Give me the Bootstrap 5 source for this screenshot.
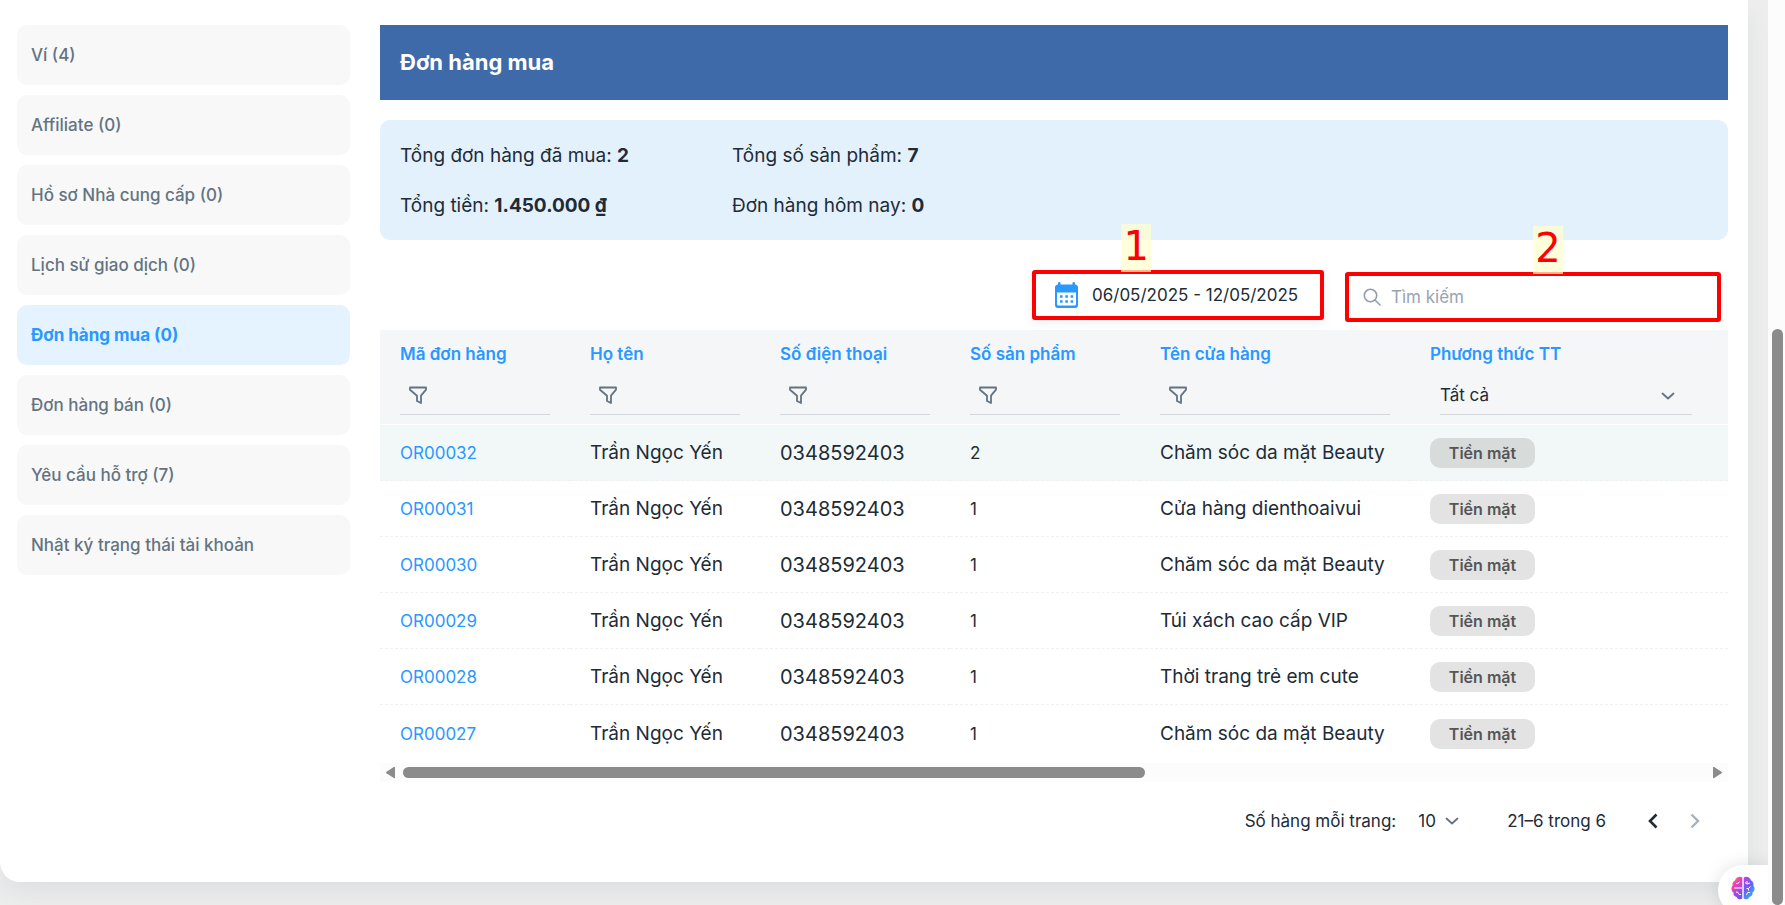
<!DOCTYPE html>
<html lang="vi">
<head>
<meta charset="utf-8">
<meta name="viewport" content="width=device-width, initial-scale=1">
<title>Đơn hàng mua</title>
<link href="https://cdn.jsdelivr.net/npm/bootstrap@5.3.0/dist/css/bootstrap.min.css" rel="stylesheet">
<style>
  html, body { height: 100%; }
  body { font-family: Inter, Roboto, sans-serif; font-size: 17px; line-height: 24px; color: #212b36; background: #ededed; overflow: hidden; }
  .viewport-area { min-width: 0; background: #ededed; }
  .account-card { background: #fff; border-radius: 0 0 20px 20px; margin: 0 20px 24px 0; padding: 25px 20px 43px 17px; box-shadow: 0 12px 24px -4px rgba(145,158,171,.2); }
  .side-menu { width: 333px; flex: none; gap: 10px; }
  .side-menu a { background: #f8f8f8; color: #637381; border-radius: 10px; padding: 18px 14px; text-decoration: none; font-weight: 500; }
  .side-menu a.active { background: #e5f2ff; color: #2998ff; font-weight: 700; }
  .order-area { min-width: 0; margin-left: 30px; }
  .title-bar { background: #3f6aa9; color: #fff; padding: 25px 20px; }
  .title-bar h1 { font-size: 22px; line-height: 25px; font-weight: 700; margin: 0; }
  .summary { background: #e3f1fd; border-radius: 10px; margin-top: 20px; padding: 21px 20px 19px; row-gap: 20px; font-size: 19px; line-height: 30px; display: grid; grid-template-columns: 332px 1fr; }
  .tools { margin-top: 30px; gap: 21px; padding-right: 7px; }
  .marked { position: relative; border: 4px solid #f00; border-radius: 3px; height: 50px; background: #fff; }
  .date-range { width: 292px; padding: 0 0 0 19px; gap: 14px; color: #212b36; box-shadow: 0 3px 8px rgba(145,158,171,.16); }
  .search-field { width: 376px; margin-top: 2px; padding: 0 14px; gap: 10px; color: #919eab; }
  .search-field input { border: 0; outline: 0; background: none; min-width: 0; flex: 1; padding: 0; }
  .search-field input::placeholder { color: #98a4b0; opacity: 1; }
  .step-tag { position: absolute; bottom: 100%; left: 50%; width: 30px; height: 48px; margin-bottom: 2px; background: rgba(255,255,204,.7); color: #f00; font: 40px/44px "DejaVu Sans", sans-serif; text-align: center; }
  .date-range .step-tag { left: 30%; }
  .orders { table-layout: fixed; width: 100%; margin: 8px 0 0; border-collapse: separate; border-spacing: 0; }
  .orders th { background: #f4f6f8; color: #2998ff; font-weight: 600; padding: 12px 20px 9px; border-bottom: 1px solid #fff; vertical-align: top; }
  .orders td { height: 56px; padding: 0 20px; border-bottom: 1px dashed #eef1f3; white-space: nowrap; vertical-align: middle; }
  .orders tr.current td { background: #f2f8f7; }
  .orders tbody tr:last-child td { border-bottom: 0; height: 58px; }
  .orders td a { color: #2998ff; text-decoration: none; }
  .orders .big { font-size: 19px; }
  .orders .phone { font-size: 20px; }
  .filter-box { height: 39px; margin-top: 10px; border-bottom: 1px solid #d3d7db; padding: 8px; display: flex; align-items: center; }
  .filter-box svg { flex: none; }
  .filter-box input { border: 0; background: none; outline: 0; min-width: 0; width: 100%; }
  .pay-filter { height: 39px; margin: 10px 16px 0 10px; border-bottom: 1px solid #d3d7db; position: relative; }
  .pay-filter select, .rows-pick select { appearance: none; border: 0; background: none; color: #212b36; padding: 0; outline: 0; }
  .pay-filter select { width: 100%; height: 38px; }
  .pay-filter svg { position: absolute; right: 17px; top: 15px; pointer-events: none; }
  .pay-chip { display: inline-block; width: 105px; height: 30px; line-height: 30px; text-align: center; border-radius: 10px; background: rgba(0,0,0,.11); color: #555; font-weight: 600; font-size: 16px; vertical-align: middle; }
  .h-scroll { height: 19px; background: #fcfcfc; padding: 0 5px; gap: 7px; }
  .h-scroll .rail { flex: 1; }
  .h-scroll .thumb { width: 57%; height: 11px; border-radius: 6px; background: #8b8b8b; }
  .pager { margin-top: 21px; padding-right: 26px; height: 36px; }
  .pager button { border: 0; background: none; padding: 0; line-height: 0; }
  .rows-pick { margin: 0 48px 0 22px; gap: 9px; }
  .prev-page { margin: 0 28px 0 40px; }
  .v-scroll { width: 17px; flex: none; background: #fcfcfc; }
  .v-scroll div { position: absolute; top: 329px; bottom: 0; right: 2px; width: 11px; border-radius: 6px; background: #8b8b8b; }
  .assistant { position: absolute; right: 17px; bottom: -10px; width: 50px; height: 50px; border: 0; border-radius: 25px 0 0 25px; background: #fff; box-shadow: 0 0 18px rgba(0,0,0,.12); clip-path: inset(-30px 0 0 -30px); padding: 11px 0 15px 13px; text-align: left; line-height: 0; }
</style>
</head>
<body>
<svg class="d-none">
  <symbol id="funnel" viewBox="0 0 20 20"><path d="M2 2.500h16v2.200l-5 6v7.300l-4-2v-5.300l-7-6z" fill="none" stroke="#637381" stroke-width="1.800" stroke-linejoin="round"/></symbol>
  <symbol id="chev" viewBox="0 0 14 10"><path d="M1.500 2.500 7 7.500l5.500-5" fill="none" stroke="#637381" stroke-width="1.800" stroke-linecap="round" stroke-linejoin="round"/></symbol>
</svg>
<div class="d-flex h-100 position-relative overflow-hidden">
  <div class="viewport-area flex-grow-1">
    <div class="account-card d-flex">
      <nav class="side-menu d-flex flex-column" aria-label="Tài khoản">
        <a href="#">Ví (4)</a>
        <a href="#">Affiliate (0)</a>
        <a href="#">Hồ sơ Nhà cung cấp (0)</a>
        <a href="#">Lịch sử giao dịch (0)</a>
        <a href="#" class="active">Đơn hàng mua (0)</a>
        <a href="#">Đơn hàng bán (0)</a>
        <a href="#">Yêu cầu hỗ trợ (7)</a>
        <a href="#">Nhật ký trạng thái tài khoản</a>
      </nav>
      <main class="order-area flex-grow-1">
        <header class="title-bar"><h1>Đơn hàng mua</h1></header>
        <section class="summary">
          <div>Tổng đơn hàng đã mua: <b>2</b></div>
          <div>Tổng số sản phẩm: <b>7</b></div>
          <div>Tổng tiền: <b>1.450.000 ₫</b></div>
          <div>Đơn hàng hôm nay: <b>0</b></div>
        </section>
        <div class="tools d-flex justify-content-end">
          <button type="button" class="marked date-range d-flex align-items-center">
            <svg width="23" height="26" viewBox="0 0 23 26"><path fill="#2998ff" d="M3 2.500V1q0-1 1.200-1T5.500 1v1.500h12V1q0-1 1.200-1T20 1v1.500q3 .3 3 3V23a3 3 0 0 1-3 3H3a3 3 0 0 1-3-3V5.500q0-2.700 3-3z"/><path fill="#fff" d="M2 10.500h19V22q0 1.500-1.500 1.500h-16Q2 23.500 2 22z"/><path stroke="#2998ff" stroke-width="2.600" stroke-dasharray="2.600 2.700" d="M5 14.500h13.500M5 19.500h13.500"/></svg>
            <span>06/05/2025 - 12/05/2025</span>
            <span class="step-tag">1</span>
          </button>
          <div class="marked search-field d-flex align-items-center">
            <svg width="18" height="18" viewBox="0 0 18 18" fill="none" stroke="#919eab" stroke-width="1.600" stroke-linecap="round"><circle cx="7.500" cy="7.500" r="6.200"/><path d="m12 12 5 5"/></svg>
            <input type="text" placeholder="Tìm kiếm" aria-label="Tìm kiếm">
            <span class="step-tag">2</span>
          </div>
        </div>
        <table class="orders">
          <colgroup><col style="width:190px"><col style="width:190px"><col style="width:190px"><col style="width:190px"><col style="width:270px"><col></colgroup>
          <thead><tr>
            <th>Mã đơn hàng<div class="filter-box"><svg width="20" height="20"><use href="#funnel"/></svg><input type="text" aria-label="Lọc mã đơn hàng"></div></th>
            <th>Họ tên<div class="filter-box"><svg width="20" height="20"><use href="#funnel"/></svg><input type="text" aria-label="Lọc họ tên"></div></th>
            <th>Số điện thoại<div class="filter-box"><svg width="20" height="20"><use href="#funnel"/></svg><input type="text" aria-label="Lọc số điện thoại"></div></th>
            <th>Số sản phẩm<div class="filter-box"><svg width="20" height="20"><use href="#funnel"/></svg><input type="text" aria-label="Lọc số sản phẩm"></div></th>
            <th>Tên cửa hàng<div class="filter-box"><svg width="20" height="20"><use href="#funnel"/></svg><input type="text" aria-label="Lọc tên cửa hàng"></div></th>
            <th>Phương thức TT<div class="pay-filter"><select aria-label="Phương thức TT"><option>Tất cả</option></select><svg width="14" height="10"><use href="#chev"/></svg></div></th>
          </tr></thead>
          <tbody>
            <tr class="current"><td><a href="#">OR00032</a></td><td class="big">Trần Ngọc Yến</td><td class="phone">0348592403</td><td>2</td><td class="big">Chăm sóc da mặt Beauty</td><td><span class="pay-chip">Tiền mặt</span></td></tr>
            <tr><td><a href="#">OR00031</a></td><td class="big">Trần Ngọc Yến</td><td class="phone">0348592403</td><td>1</td><td class="big">Cửa hàng dienthoaivui</td><td><span class="pay-chip">Tiền mặt</span></td></tr>
            <tr><td><a href="#">OR00030</a></td><td class="big">Trần Ngọc Yến</td><td class="phone">0348592403</td><td>1</td><td class="big">Chăm sóc da mặt Beauty</td><td><span class="pay-chip">Tiền mặt</span></td></tr>
            <tr><td><a href="#">OR00029</a></td><td class="big">Trần Ngọc Yến</td><td class="phone">0348592403</td><td>1</td><td class="big">Túi xách cao cấp VIP</td><td><span class="pay-chip">Tiền mặt</span></td></tr>
            <tr><td><a href="#">OR00028</a></td><td class="big">Trần Ngọc Yến</td><td class="phone">0348592403</td><td>1</td><td class="big">Thời trang trẻ em cute</td><td><span class="pay-chip">Tiền mặt</span></td></tr>
            <tr><td><a href="#">OR00027</a></td><td class="big">Trần Ngọc Yến</td><td class="phone">0348592403</td><td>1</td><td class="big">Chăm sóc da mặt Beauty</td><td><span class="pay-chip">Tiền mặt</span></td></tr>
          </tbody>
        </table>
        <div class="h-scroll d-flex align-items-center">
          <svg width="11" height="13" viewBox="0 0 11 13"><path fill="#8b8b8b" d="M10 1.500v10q0 1-1.200.4L1.500 7.300q-.9-.8 0-1.600L8.800.9Q10 .4 10 1.500z"/></svg>
          <div class="rail"><div class="thumb"></div></div>
          <svg width="11" height="13" viewBox="0 0 11 13"><path fill="#8b8b8b" d="M1 1.500v10q0 1 1.200.4l7.300-4.600q.9-.8 0-1.600L2.200.9Q1 .4 1 1.500z"/></svg>
        </div>
        <footer class="pager d-flex align-items-center justify-content-end">
          <label for="rows">Số hàng mỗi trang:</label>
          <span class="rows-pick d-flex align-items-center"><select id="rows"><option>10</option></select><svg width="14" height="10"><use href="#chev"/></svg></span>
          <span>21–6 trong 6</span>
          <button type="button" class="prev-page" aria-label="Trang trước"><svg width="14" height="18" viewBox="0 0 14 18"><path d="M10.500 2.500 4 9l6.500 6.500" fill="none" stroke="#212b36" stroke-width="2.600"/></svg></button>
          <button type="button" aria-label="Trang sau"><svg width="14" height="18" viewBox="0 0 14 18"><path d="M3.500 2.500 10 9l-6.500 6.500" fill="none" stroke="#a6b1bc" stroke-width="2.400"/></svg></button>
        </footer>
      </main>
    </div>
  </div>
  <div class="v-scroll"><div></div></div>
  <button type="button" class="assistant" aria-label="Trợ lý">
    <svg width="24" height="24" viewBox="0 0 24 24"><defs><linearGradient id="bl" x1="0" y1="0" x2=".5" y2="1"><stop offset="0" stop-color="#ffa51e"/><stop offset=".4" stop-color="#f13fb5"/><stop offset="1" stop-color="#7a4df5"/></linearGradient><linearGradient id="br" x1="0" y1="0" x2=".6" y2="1"><stop offset="0" stop-color="#c63fe0"/><stop offset=".5" stop-color="#6f5cf2"/><stop offset="1" stop-color="#29b1ff"/></linearGradient></defs>
    <path fill="url(#bl)" d="M11.300 1.500v21c-2.200 1.500-5 .6-5.600-1.600C3.300 20.600 2 18.500 2.600 16.500.1 15.200-.1 11.300 1.600 9.700 1 7 2.200 5 4 4.400 4.700 1.400 8.500-.5 11.300 1.500z"/>
    <path fill="url(#br)" d="M12.700 1.500v21c2.200 1.500 5 .6 5.600-1.600 2.400-.3 3.700-2.400 3.100-4.400 2.500-1.300 2.700-5.200 1-6.800.6-2.700-.6-4.700-2.400-5.300-.7-3-4.500-4.900-7.300-2.900z"/>
    <path d="M3 12h8M5 7.500q3 .5 3.500-2M5 16q2.500-.5 3 2.500h2M16 5v3l3-1M16 8l-2-1.500M15.500 12.500h2l2-2M17.500 12.500v2M15.500 19l1-2.500h2.500" fill="none" stroke="#fff"/></svg>
  </button>
</div>
<script src="https://cdn.jsdelivr.net/npm/bootstrap@5.3.0/dist/js/bootstrap.bundle.min.js"></script>
</body>
</html>
